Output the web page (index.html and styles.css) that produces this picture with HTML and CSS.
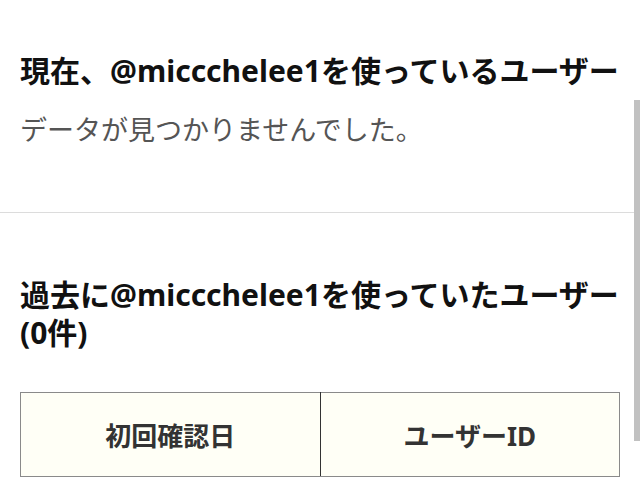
FILE: index.html
```html
<!DOCTYPE html>
<html lang="ja">
<head>
<meta charset="utf-8">
<link rel="stylesheet" href="styles.css">
</head>
<body>
<section class="block block-current">
  <h2 class="title">現在、@miccchelee1を使っているユーザー</h2>
  <p class="empty">データが見つかりませんでした。</p>
</section>
<section class="block block-past">
  <h2 class="title">過去に@miccchelee1を使っていたユーザー<span class="count">(0件)</span></h2>
  <table class="history">
    <thead>
      <tr>
        <th class="col-date">初回確認日</th>
        <th class="col-id">ユーザーID</th>
      </tr>
    </thead>
  </table>
</section>
<div class="scrollbar"></div>
</body>
</html>
```
FILE: styles.css
```css
html, body {
  margin: 0;
  padding: 0;
  background: #ffffff;
}
body {
  font-family: "Noto Sans", "Noto Sans CJK JP", sans-serif;
  color: #111111;
  width: 640px;
  height: 503px;
  overflow: hidden;
  position: relative;
}
.block {
  padding: 0 20px;
}
.block-current {
  padding-top: 52px;
  padding-bottom: 63px;
  border-bottom: 1px solid #dcdcdc;
}
.block-past {
  padding-top: 63px;
}
.title {
  margin: 0;
  font-size: 30px;
  line-height: 38px;
  font-weight: 700;
  color: #111111;
}
.count {
  display: inline-block;
  white-space: nowrap;
}
.empty {
  margin: 21px 0 0;
  font-size: 27px;
  line-height: 38px;
  color: #555555;
}
.history {
  margin-top: 40px;
  width: 600px;
  border-collapse: collapse;
  table-layout: fixed;
}
.history th {
  height: 83px;
  padding: 0;
  background: #fffff6;
  border: 1px solid #8a8a8a;
  font-size: 26px;
  font-weight: 700;
  color: #333333;
  text-align: center;
}
.history .col-date {
  border-right: 1px solid #333333;
}
.scrollbar {
  position: absolute;
  right: 0;
  top: 100px;
  width: 6px;
  height: 341px;
  background: #c1c1c1;
}
```
